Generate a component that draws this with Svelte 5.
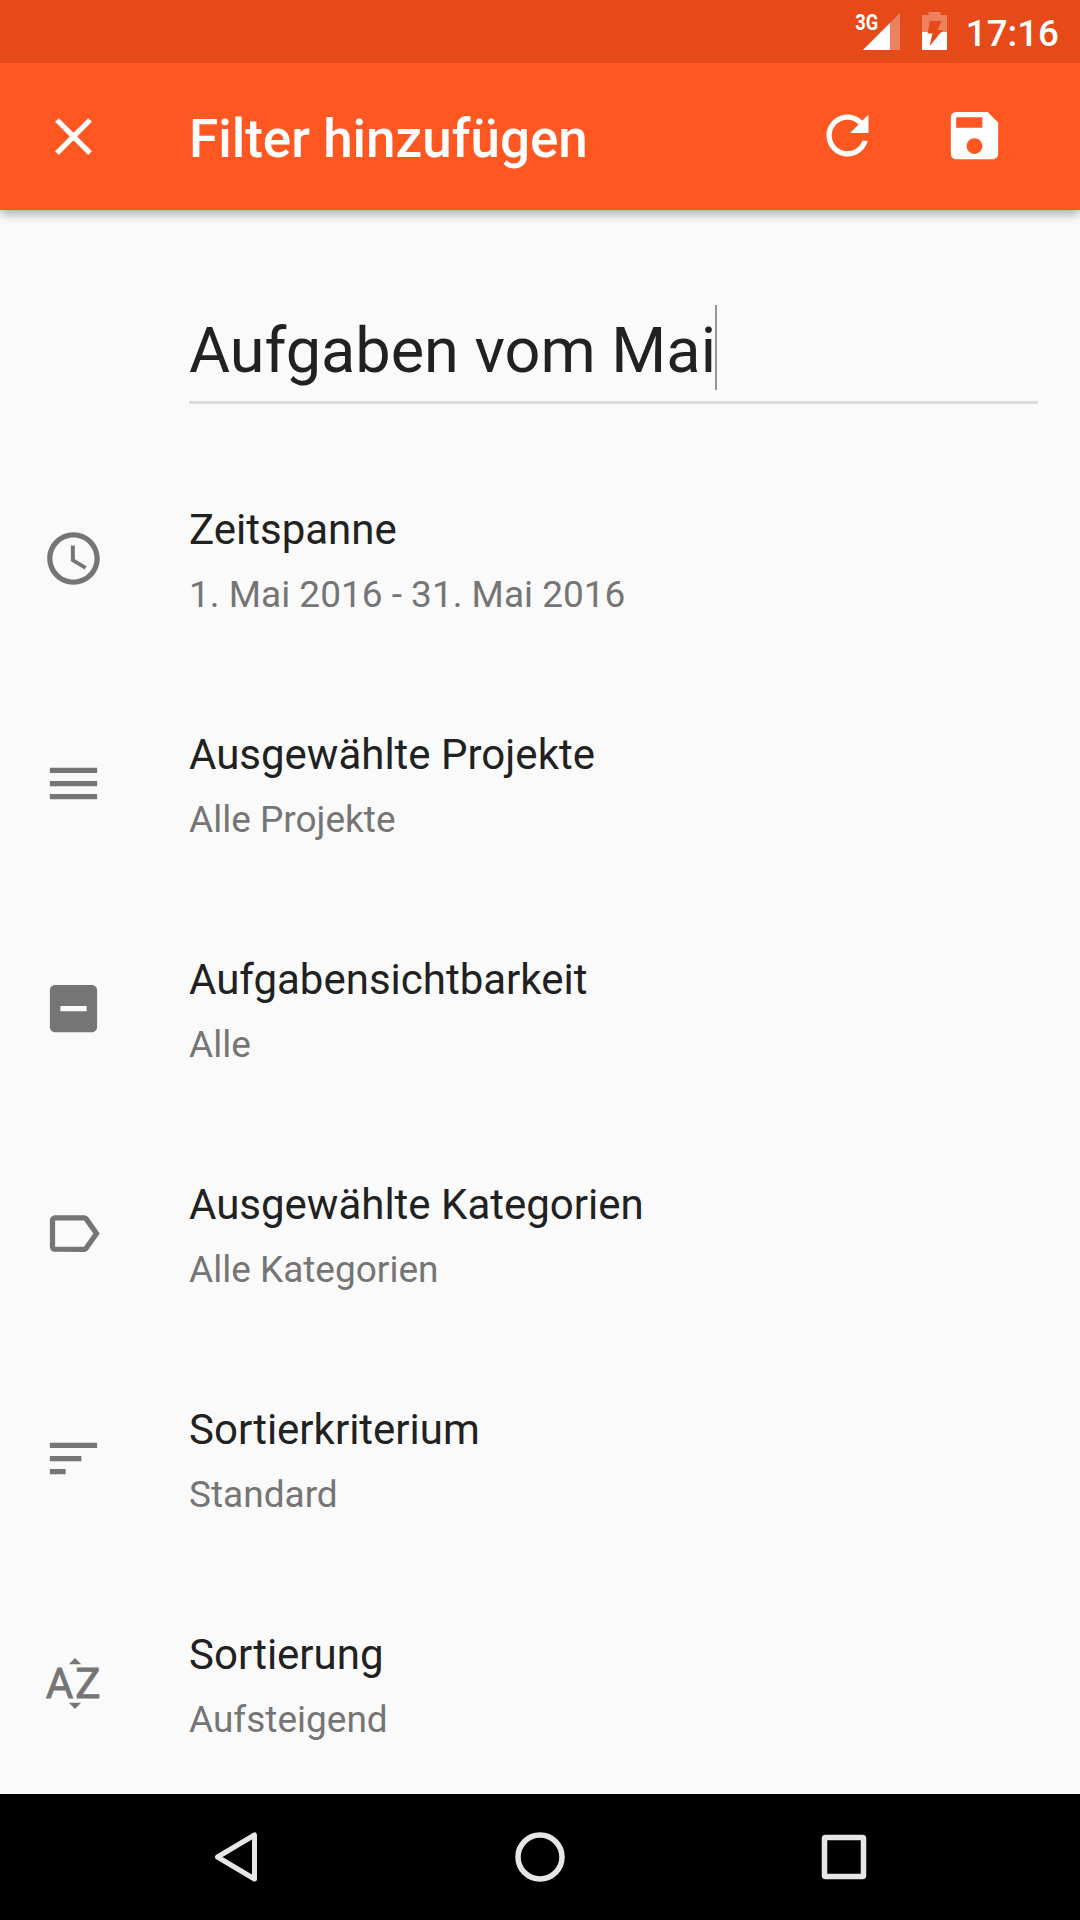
<script lang="ts">
  let filterName = 'Aufgaben vom Mai';

  const rows = [
    { icon: 'time', title: 'Zeitspanne', value: '1. Mai 2016 - 31. Mai 2016' },
    { icon: 'projects', title: 'Ausgewählte Projekte', value: 'Alle Projekte' },
    { icon: 'visibility', title: 'Aufgabensichtbarkeit', value: 'Alle' },
    { icon: 'label', title: 'Ausgewählte Kategorien', value: 'Alle Kategorien' },
    { icon: 'sort', title: 'Sortierkriterium', value: 'Standard' },
    { icon: 'order', title: 'Sortierung', value: 'Aufsteigend' },
  ];

  const iconPaths: Record<string, string> = {
    time: 'M11.99 2C6.47 2 2 6.48 2 12s4.47 10 9.99 10C17.52 22 22 17.52 22 12S17.52 2 11.99 2zM12 20c-4.42 0-8-3.58-8-8s3.58-8 8-8 8 3.58 8 8-3.58 8-8 8zm.5-13H11v6l5.25 3.15.75-1.23-4.5-2.67z',
    projects: 'M3 18h18v-2H3v2zm0-5h18v-2H3v2zm0-7v2h18V6H3z',
    visibility: 'M19 3H5c-1.1 0-2 .9-2 2v14c0 1.1.9 2 2 2h14c1.1 0 2-.9 2-2V5c0-1.1-.9-2-2-2zm-2 10H7v-2h10v2z',
    label: 'M17.63 5.84C17.27 5.33 16.67 5 16 5L5 5.01C3.9 5.01 3 5.9 3 7v10c0 1.1.9 1.99 2 1.99L16 19c.67 0 1.27-.33 1.63-.84L22 12l-4.37-6.16zM16 17H5V7h11l3.55 5L16 17z',
    sort: 'M3 18h6v-2H3v2zM3 6v2h18V6H3zm0 7h12v-2H3v2z',
    order: 'M14.94 4.66h-4.72l2.36-2.36zm-4.69 14.71h4.66l-2.33 2.33z',
  };
</script>

<div class="screen">
  <div class="status-bar">
    <svg class="signal" viewBox="0 0 48 40">
      <path d="M46 3v37H9z" fill="#fff" fill-opacity="0.3" />
      <path d="M36 13v27H9z" fill="#fff" />
      <text x="1.2" y="19.5" textLength="23" lengthAdjust="spacingAndGlyphs">3G</text>
    </svg>
    <svg class="battery" viewBox="0 0 25 38">
      <path d="M6.5 0h12v3H25v17H0V3h6.500z" fill="#fff" fill-opacity="0.3" />
      <path d="M0 20h25v18H0z" fill="#fff" />
      <path d="M8 9h11.500l-4 9H21L7.500 34l3-12.500H5.500z" fill="#e64a19" />
    </svg>
    <span class="clock">17:16</span>
  </div>

  <header class="toolbar">
    <button class="icon-btn" aria-label="Schließen">
      <svg class="icon" viewBox="0 0 24 24"><path d="M19 6.41L17.590 5 12 10.590 6.410 5 5 6.410 10.590 12 5 17.590 6.410 19 12 13.410 17.590 19 19 17.590 13.410 12z" /></svg>
    </button>
    <h1>Filter hinzufügen</h1>
    <button class="icon-btn action" aria-label="Zurücksetzen">
      <svg class="icon" viewBox="0 0 24 24"><path d="M17.650 6.350C16.200 4.900 14.210 4 12 4c-4.420 0-7.990 3.580-7.990 8s3.570 8 7.990 8c3.730 0 6.840-2.550 7.730-6h-2.080c-.820 2.330-3.040 4-5.650 4-3.310 0-6-2.690-6-6s2.690-6 6-6c1.660 0 3.140.690 4.220 1.780L13 11h7V4l-2.350 2.350z" /></svg>
    </button>
    <button class="icon-btn action" aria-label="Speichern">
      <svg class="icon" viewBox="0 0 24 24"><path d="M17 3H5c-1.110 0-2 .9-2 2v14c0 1.100.890 2 2 2h14c1.100 0 2-.9 2-2V7l-4-4zm-5 16c-1.660 0-3-1.340-3-3s1.340-3 3-3 3 1.340 3 3-1.340 3-3 3zm3-10H5V5h10v4z" /></svg>
    </button>
  </header>

  <main>
    <div class="name-field">
      <span class="name">{filterName}</span><span class="caret"></span>
    </div>

    <ul class="rows">
      {#each rows as row}
        <li class="row">
          <svg class="icon" viewBox="0 0 24 24">
            <path d={iconPaths[row.icon]} />
            {#if row.icon === 'order'}
              <text class="az" x="1.4 12.7" y="17.7">AZ</text>
            {/if}
          </svg>
          <div class="row-text">
            <span class="title">{row.title}</span>
            <span class="value">{row.value}</span>
          </div>
        </li>
      {/each}
    </ul>
  </main>

  <nav class="nav-bar">
    <svg viewBox="0 0 60 60"><path d="M48.500 8v44L11.500 30z" stroke-width="5" /></svg>
    <svg viewBox="0 0 60 60"><circle cx="30" cy="30" r="22" stroke-width="5.500" /></svg>
    <svg viewBox="0 0 60 60"><rect x="10.500" y="10.500" width="39" height="39" rx="1" stroke-width="5.500" /></svg>
  </nav>
</div>

<style>
:global(body) { margin: 0; background: #fafafa }

.screen {
  display: flex;
  flex-direction: column;
  width: 1080px;
  height: 1920px;
  overflow: hidden;
  background: #fafafa;
  color: #212121;
  font-family: Roboto, sans-serif;
}

.status-bar {
  display: flex;
  justify-content: flex-end;
  height: 63px;
  flex-shrink: 0;
  padding-right: 21px;
  box-sizing: border-box;
  background: #e64a19;
  color: #fff;
  z-index: 2;
}
.signal { width: 48px; height: 40px; margin-top: 10px }
.signal text { fill: #fff; font-size: 21.5px; font-weight: 700 }
.battery { width: 25px; height: 38px; margin: 12px 19px 0 20px }
.clock {
  font-size: 36.75px;
  font-weight: 500;
  line-height: 68px;
}

.toolbar {
  display: flex;
  align-items: center;
  height: 147px;
  flex-shrink: 0;
  padding: 0 41px 0 10px;
  box-sizing: border-box;
  background: #ff5722;
  color: #fff;
  z-index: 1;
  box-shadow: 0 4px 10px rgba(0, 0, 0, 0.32);
}
.toolbar h1 {
  flex: 1;
  margin: 5px 0 0 53px;
  font-size: 53px;
  font-weight: 500;
  line-height: 62px;
}
.icon-btn {
  display: flex;
  align-items: center;
  justify-content: center;
  width: 126px;
  height: 126px;
  padding: 0;
  border: 0;
  background: none;
  color: inherit;
}
.action { width: 127px; padding: 0 3px 2px 0 }
.icon { width: 63px; height: 63px; fill: currentColor; flex-shrink: 0 }

main { flex: 1; min-height: 0 }

.name-field {
  display: flex;
  align-items: flex-start;
  height: 96px;
  margin: 95px 42px 0 189px;
  border-bottom: 3px solid #dcdcdc;
}
.name { font-size: 63px; line-height: 92px }
.caret { width: 2px; height: 85px; margin-left: -1px; background: #969696 }

.rows { margin: 42px 0 0; padding: 0; list-style: none }
.row {
  display: flex;
  align-items: center;
  height: 225px;
  padding-left: 42px;
}
.row .icon { color: #757575 }
.row-text { display: flex; flex-direction: column; margin: 5px 0 0 84px }
.title { font-size: 42px; line-height: 50px }
.value { margin-top: 17px; color: #757575; font-size: 37px; line-height: 45px }
.az { font-size: 16.1px; stroke: currentColor; stroke-width: 0.3px }

.nav-bar {
  display: grid;
  grid-template-columns: repeat(3, 304px);
  place-content: center;
  justify-items: center;
  height: 126px;
  flex-shrink: 0;
  background: #000;
}
.nav-bar svg { width: 60px; height: 60px; fill: none; stroke: #e6e6e6; stroke-linejoin: round }
</style>
